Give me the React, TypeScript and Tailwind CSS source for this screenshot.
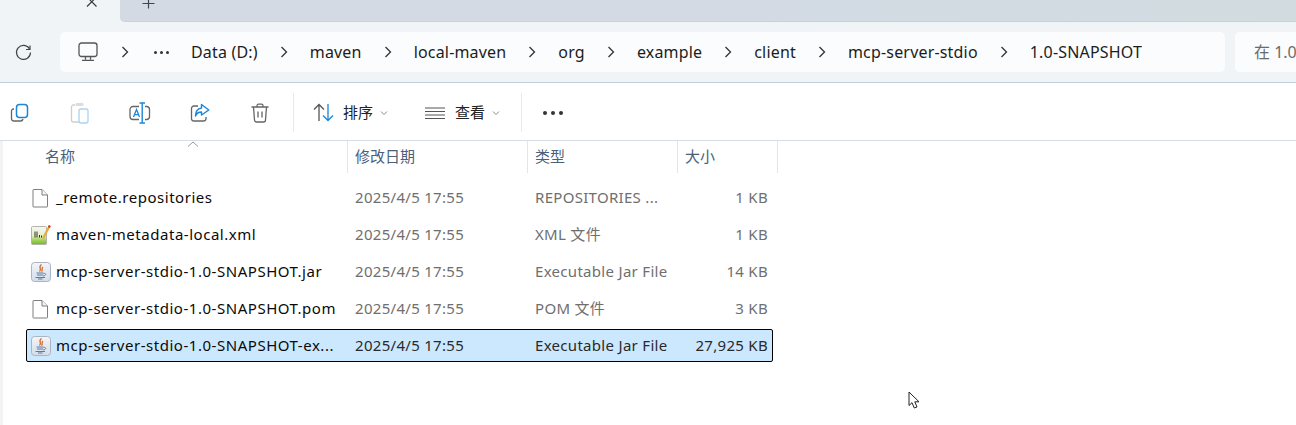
import React from "react";

const font = "font-['Noto_Sans','Noto_Sans_CJK_SC',sans-serif]";

function Chevron() {
  return (
    <div className="w-[52px] flex justify-center shrink-0">
      <svg width="8" height="12" viewBox="0 0 8 12" fill="none" stroke="#333" strokeWidth="1.3">
        <path d="M1.5 1 L6.5 6 L1.5 11" />
      </svg>
    </div>
  );
}

function Crumb({ t }: { t: string }) {
  return <span className="text-[16px] text-[#1c1c1c] whitespace-nowrap tracking-[0.18px] leading-none">{t}</span>;
}

function FileIcon() {
  return (
    <svg width="18" height="20" viewBox="0 0 18 20" fill="none">
      <path d="M2.5 1.5 H11 L16.5 7 V18.5 a0.5 0.5 0 0 1 -.5 .5 H2.5 a0.5 0.5 0 0 1 -.5 -.5 V2 a.5 .5 0 0 1 .5 -.5Z" fill="#fff" stroke="#7f7f7f" />
      <path d="M11 1.5 V7 H16.5" stroke="#7f7f7f" fill="#f4f4f4" />
    </svg>
  );
}

function XmlIcon() {
  return (
    <svg width="20" height="20" viewBox="0 0 20 20" fill="none">
      <defs>
        <linearGradient id="xmlg" x1="0" y1="0" x2="0" y2="1">
          <stop offset="0" stopColor="#f7f8f2" />
          <stop offset="0.5" stopColor="#e4eecb" />
          <stop offset="0.75" stopColor="#a6d35c" />
          <stop offset="1" stopColor="#6dbb2a" />
        </linearGradient>
      </defs>
      <rect x="0.5" y="1.5" width="15" height="18" rx="1" fill="url(#xmlg)" stroke="#b4b4aa" />
      <path d="M4 6.5v6M6 6.5v6M8.5 10v2.5M10.5 10.5v2" stroke="#34342a" strokeWidth="1" />
      <path d="M18.6 1 L12 13.5" stroke="#eba840" strokeWidth="2.2" />
      <path d="M18.8 0.4 L17.8 2.4" stroke="#c6402e" strokeWidth="2.2" />
    </svg>
  );
}

function JavaIcon() {
  return (
    <svg width="20" height="20" viewBox="0 0 20 20" fill="none">
      <defs>
        <linearGradient id="jg" x1="0" y1="0" x2="0" y2="1">
          <stop offset="0" stopColor="#f4f5f8" />
          <stop offset="1" stopColor="#d3dde9" />
        </linearGradient>
      </defs>
      <rect x="0.5" y="0.5" width="19" height="19" rx="3" fill="url(#jg)" stroke="#a9b5c4" />
      <path d="M10.5 2.5 C6.5 5.5 11.5 6.5 8.5 9.5 M12 5 C9.5 7 12.5 7.5 10.5 9.5" stroke="#d9691f" strokeWidth="1.3" />
      <path d="M5.5 11 H12.5 M6 13 H12 M4.5 15.5 H14 M7 17 H11.5" stroke="#5d7ba3" strokeWidth="1" />
      <path d="M12.5 11.5 C15.5 11 15.5 13.5 12 14" stroke="#5d7ba3" strokeWidth="0.9" />
    </svg>
  );
}

type RowT = { icon: React.ReactNode; name: string; type: string; size: string; sel?: boolean };

const rows: RowT[] = [
  { icon: <FileIcon />, name: "_remote.repositories", type: "REPOSITORIES ...", size: "1 KB" },
  { icon: <XmlIcon />, name: "maven-metadata-local.xml", type: "XML 文件", size: "1 KB" },
  { icon: <JavaIcon />, name: "mcp-server-stdio-1.0-SNAPSHOT.jar", type: "Executable Jar File", size: "14 KB" },
  { icon: <FileIcon />, name: "mcp-server-stdio-1.0-SNAPSHOT.pom", type: "POM 文件", size: "3 KB" },
  { icon: <JavaIcon />, name: "mcp-server-stdio-1.0-SNAPSHOT-ex...", type: "Executable Jar File", size: "27,925 KB", sel: true },
];

function Row({ r }: { r: RowT }) {
  const dim = r.sel ? "text-[#2a2a2a]" : "text-[#6f6f6f]";
  return (
    <div className={`h-[33px] w-[747px] flex items-center border rounded-[2px] ${r.sel ? "bg-[#cce8ff] border-black" : "border-transparent"} text-[15px] tracking-[0.3px]`}>
      <div className="w-[30px] pl-[4px] flex justify-start shrink-0">{r.icon}</div>
      <div className="w-[298px] -ml-[1px] mr-[1px] text-[#0a0a0a] whitespace-nowrap tracking-[0.53px]">{r.name}</div>
      <div className={`w-[180px] ${dim} whitespace-nowrap`}>2025/4/5 17:55</div>
      <div className={`w-[150px] ${dim} whitespace-nowrap`}>{r.type}</div>
      <div className={`w-[87px] pr-[4px] text-right ${dim} whitespace-nowrap`}>{r.size}</div>
    </div>
  );
}

function Header({ t, w, pad }: { t: string; w: string; pad: string }) {
  return (
    <div className={`${w} ${pad} h-[32px] flex items-center pb-[1px] border-r border-[#e5e5e5] text-[15px] text-[#4c607a] whitespace-nowrap shrink-0`}>{t}</div>
  );
}

function ToolBtn({ children }: { children: React.ReactNode }) {
  return <div className="w-[60px] flex justify-center items-center shrink-0">{children}</div>;
}

function SmallDown() {
  return (
    <svg width="8" height="6" viewBox="0 0 8 6" fill="none" stroke="#8a8a8a" strokeWidth="1">
      <path d="M1 1.5 L4 4.5 L7 1.5" />
    </svg>
  );
}

export default function App() {
  return (
    <div className={`${font} w-[1296px] h-[425px] overflow-hidden bg-white relative`}>
      {/* tab strip */}
      <div className="h-[22px] flex bg-[#f1f4f7]">
        <div className="w-[120px] flex justify-end pr-[22px] shrink-0">
          <svg width="12" height="8" viewBox="0 0 12 8" fill="none" stroke="#333" strokeWidth="1.1">
            <path d="M1 -3 L10.5 6.5 M10.5 -3 L1 6.5" />
          </svg>
        </div>
        <div className="flex-1 rounded-bl-[5px] border-b border-[#c8d0da] bg-gradient-to-r from-[#d3dae4] via-[#d3dae4] to-[#d2dce0] pl-[22px]">
          <svg width="13" height="9" viewBox="0 0 13 9" fill="none" stroke="#444" strokeWidth="1.2">
            <path d="M6.5 -3 V8.5 M0.5 3.5 H12.5" />
          </svg>
        </div>
      </div>

      {/* address band */}
      <div className="h-[61px] bg-[#f1f4f7] border-b border-[#c4ced8] flex items-start pt-[10px]">
        <div className="w-[60px] h-[40px] flex items-center justify-center shrink-0 pr-[14px]">
          <svg width="17" height="17" viewBox="0 0 17 17" fill="none" stroke="#444" strokeWidth="1.2">
            <path d="M14.6 5 A7 7 0 1 0 15.5 8.5" />
            <path d="M15 1.5 V5.5 H11" />
          </svg>
        </div>
        <div className="w-[1165px] h-[40px] bg-[#fbfcfd] rounded-[5px] flex items-center pl-[18px] shrink-0">
          <svg width="20" height="20" viewBox="0 0 20 20" fill="none" stroke="#555" strokeWidth="1.3">
            <rect x="1" y="1" width="18" height="13.5" rx="2.5" />
            <path d="M7.5 15 V17.5 M12.5 15 V17.5 M4 18.3 H16" />
          </svg>
          <div className="w-[54px] flex justify-center shrink-0">
            <svg width="8" height="12" viewBox="0 0 8 12" fill="none" stroke="#333" strokeWidth="1.3">
              <path d="M1.5 1 L6.5 6 L1.5 11" />
            </svg>
          </div>
          <div className="flex gap-[3px] w-[37px] ml-[2px] shrink-0">
            <span className="w-[3px] h-[3px] rounded-full bg-[#333]" />
            <span className="w-[3px] h-[3px] rounded-full bg-[#333]" />
            <span className="w-[3px] h-[3px] rounded-full bg-[#333]" />
          </div>
          <Crumb t="Data (D:)" />
          <Chevron />
          <Crumb t="maven" />
          <Chevron />
          <Crumb t="local-maven" />
          <Chevron />
          <Crumb t="org" />
          <Chevron />
          <Crumb t="example" />
          <Chevron />
          <Crumb t="client" />
          <Chevron />
          <Crumb t="mcp-server-stdio" />
          <Chevron />
          <Crumb t="1.0-SNAPSHOT" />
        </div>
        <div className="ml-[10px] flex-1 h-[40px] bg-[#fbfcfd] rounded-l-[5px] flex items-center pl-[19px] text-[16px] text-[#6b6b6b] whitespace-nowrap overflow-hidden">
          在 1.0
        </div>
      </div>

      {/* toolbar */}
      <div className="h-[58px] border-b border-[#d5dce3] flex items-center pt-[2px]">
        <div className="flex items-center -ml-[10px]">
          <ToolBtn>
            <svg width="20" height="20" viewBox="0 0 20 20" fill="none">
              <path d="M4 6 H3.5 A2 2 0 0 0 1.5 8 V15.5 A2.5 2.5 0 0 0 4 18 H10.5 A2.5 2.5 0 0 0 13 16" stroke="#666" strokeWidth="1.3" />
              <rect x="6.5" y="1.5" width="11" height="13" rx="3" stroke="#1a86d9" strokeWidth="1.5" />
            </svg>
          </ToolBtn>
          <ToolBtn>
            <svg width="20" height="22" viewBox="0 0 20 22" fill="none">
              <path d="M5 3 H3.5 A2 2 0 0 0 1.5 5 V18 A2 2 0 0 0 3.5 20 H9" stroke="#cfcfcf" strokeWidth="1.3" />
              <rect x="5.5" y="1" width="8" height="3" rx="1.2" fill="#dcdcdc" />
              <rect x="9" y="7" width="9" height="14" rx="2" stroke="#a9d3f2" strokeWidth="1.3" />
            </svg>
          </ToolBtn>
          <ToolBtn>
            <svg width="22" height="22" viewBox="0 0 22 22" fill="none">
              <path d="M10 4.5 H4 A3 3 0 0 0 1 7.5 V14.5 A3 3 0 0 0 4 17.5 H10" stroke="#666" strokeWidth="1.3" />
              <path d="M16 4.5 H18 A3 3 0 0 1 20.5 7.5 V14.5 A3 3 0 0 1 18 17.5 H16" stroke="#666" strokeWidth="1.3" />
              <path d="M10.5 1 H16 M13.2 1 V21 M10.5 21 H16" stroke="#1a86d9" strokeWidth="1.4" />
              <path d="M4.5 15 L7.5 7.5 L10.5 15 M5.5 12.7 H9.5" stroke="#1a86d9" strokeWidth="1.3" />
            </svg>
          </ToolBtn>
          <ToolBtn>
            <svg width="20" height="20" viewBox="0 0 20 20" fill="none">
              <path d="M8 3 H4 A2.5 2.5 0 0 0 1.5 5.5 V15.5 A2.5 2.5 0 0 0 4 18 H13.5 A2.5 2.5 0 0 0 16 15.5 V14" stroke="#666" strokeWidth="1.3" />
              <path d="M11.5 1.5 L18.8 7 L11.5 12 V9 C8.5 9 6.5 10.5 5.5 13 C5.5 8.5 8 5.5 11.5 5Z" stroke="#1a86d9" strokeWidth="1.4" strokeLinejoin="round" />
            </svg>
          </ToolBtn>
          <ToolBtn>
            <svg width="18" height="20" viewBox="0 0 18 20" fill="none" stroke="#666" strokeWidth="1.3">
              <path d="M0.5 4 H17.5 M6 4 V2.7 A1.5 1.5 0 0 1 7.5 1.2 H10.5 A1.5 1.5 0 0 1 12 2.7 V4" />
              <path d="M2.5 4 L3.5 17 A2 2 0 0 0 5.5 19 H12.5 A2 2 0 0 0 14.5 17 L15.5 4" />
              <path d="M7 8.5 V14.5 M11 8.5 V14.5" />
            </svg>
          </ToolBtn>
        </div>
        <div className="w-[1px] h-[39px] bg-[#e6e9ec] ml-[3px] shrink-0" />
        <div className="flex items-center ml-[19px] shrink-0">
          <svg width="21" height="19" viewBox="0 0 21 19" fill="none" strokeWidth="1.3">
            <path d="M6 18 V1.5 M1 6.5 L6 1.5 L11 6.5" stroke="#555" />
            <path d="M15 1 V17.5 M10 12.5 L15 17.5 L20 12.5" stroke="#1a86d9" />
          </svg>
          <span className="ml-[9px] text-[15px] text-[#222] leading-none">排序</span>
          <span className="ml-[7px]"><SmallDown /></span>
        </div>
        <div className="flex items-center ml-[37px] shrink-0">
          <svg width="20" height="12" viewBox="0 0 20 12" fill="none" stroke="#555" strokeWidth="1.1">
            <path d="M0 1 H20 M0 4.5 H20 M0 8 H20 M0 11.5 H20" />
          </svg>
          <span className="ml-[10px] text-[15px] text-[#222] leading-none">查看</span>
          <span className="ml-[7px]"><SmallDown /></span>
        </div>
        <div className="w-[1px] h-[39px] bg-[#e6e9ec] ml-[21px] shrink-0" />
        <div className="flex gap-[4px] ml-[21px] shrink-0">
          <span className="w-[4px] h-[4px] rounded-full bg-[#333]" />
          <span className="w-[4px] h-[4px] rounded-full bg-[#333]" />
          <span className="w-[4px] h-[4px] rounded-full bg-[#333]" />
        </div>
      </div>

      {/* content */}
      <div className="flex">
        <div className="w-[3px] h-[284px] bg-[#f3f3f3] shrink-0" />
        <div className="flex-1">
          <div className="flex h-[32px]">
            <Header t="名称" w="w-[345px]" pad="pl-[42px]" />
            <Header t="修改日期" w="w-[180px]" pad="pl-[7px]" />
            <Header t="类型" w="w-[150px]" pad="pl-[7px]" />
            <Header t="大小" w="w-[100px]" pad="pl-[7px]" />
          </div>
          <div className="flex flex-col gap-[4px] mt-[8px] ml-[23px]">
            {rows.map((r) => (
              <Row key={r.name} r={r} />
            ))}
          </div>
        </div>
      </div>

      {/* sort caret over header */}
      <svg className="absolute left-[187px] top-[141px]" width="12" height="6" viewBox="0 0 12 6" fill="none" stroke="#9a9a9a" strokeWidth="1">
        <path d="M1 5.5 L6 1 L11 5.5" />
      </svg>

      {/* mouse cursor */}
      <svg className="absolute left-[908px] top-[391px]" width="14" height="20" viewBox="0 0 14 20" fill="#fff" stroke="#222" strokeWidth="1">
        <path d="M1 1 V14.5 L4 11.7 L6.3 17 L9 16 L6.8 10.8 L11 10.8 Z" />
      </svg>
    </div>
  );
}
